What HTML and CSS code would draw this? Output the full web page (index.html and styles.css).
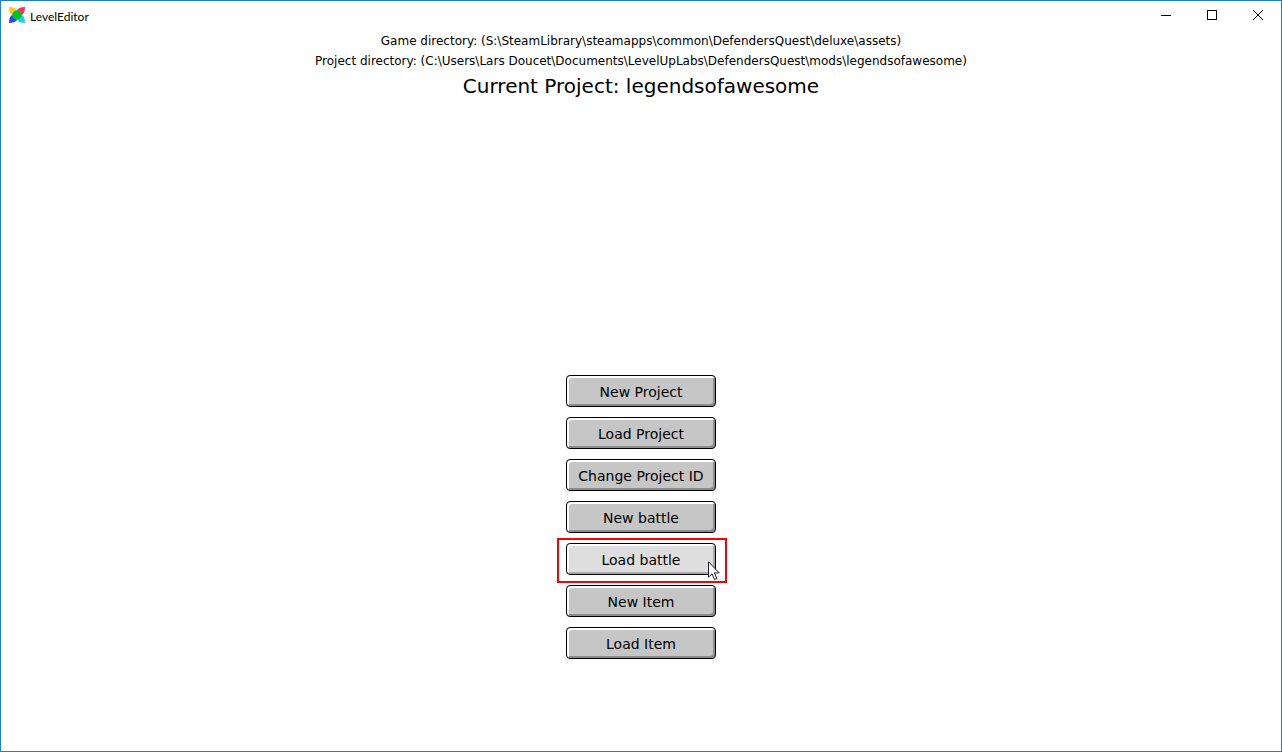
FILE: index.html
```html
<!DOCTYPE html>
<html lang="en">
<head>
<meta charset="utf-8">
<title>LevelEditor</title>
<link rel="stylesheet" href="styles.css">
</head>
<body>
<div class="window">
  <header class="titlebar">
    <svg class="logo" width="16" height="16" viewBox="0 0 16 16" aria-hidden="true">
      <path fill="#fdc62b" d="M0 0Q6 0 8 3L3 8Q0 6 0 0z"/>
      <path fill="#ff3355" d="M16 0Q10 0 8 3L13 8Q16 6 16 0z"/>
      <path fill="#3344ff" d="M0 16Q6 16 8 13L3 8Q0 10 0 16z"/>
      <path fill="#22ccff" d="M16 16Q10 16 8 13L13 8Q16 10 16 16z"/>
      <path fill="#00c42c" d="M8 3Q12 4 13 8Q12 12 8 13Q4 12 3 8Q4 4 8 3z"/>
    </svg>
    <span class="app-name">LevelEditor</span>
    <div class="controls">
      <button class="control" aria-label="Minimize"><svg width="10" height="10" viewBox="0 0 10 10" shape-rendering="crispEdges"><path d="M0 5h10v1H0z"/></svg></button>
      <button class="control" aria-label="Maximize"><svg width="10" height="10" viewBox="0 0 10 10" shape-rendering="crispEdges"><path fill="none" stroke="#000" d="M.5.5h9v9h-9z"/></svg></button>
      <button class="control" aria-label="Close"><svg width="10" height="10" viewBox="0 0 10 10"><path fill="none" stroke="#000" d="M0 0l10 10M10 0L0 10"/></svg></button>
    </div>
  </header>
  <main class="content">
    <p class="path">Game directory: (S:\SteamLibrary\steamapps\common\DefendersQuest\deluxe\assets)</p>
    <p class="path">Project directory: (C:\Users\Lars Doucet\Documents\LevelUpLabs\DefendersQuest\mods\legendsofawesome)</p>
    <h1 class="project">Current Project: legendsofawesome</h1>
    <nav class="menu">
      <button class="action">New Project</button>
      <button class="action">Load Project</button>
      <button class="action">Change Project ID</button>
      <button class="action">New battle</button>
      <div class="marked">
        <button class="action hovered">Load battle</button>
        <svg class="cursor" width="12" height="19" viewBox="0 0 12 19" aria-hidden="true"><path fill="#fff" stroke="#1c1c2c" d="M.5.8v15.400l3.500-3.400 2.500 5.700 2.400-1-2.500-5.600h4.800z"/></svg>
      </div>
      <button class="action">New Item</button>
      <button class="action">Load Item</button>
    </nav>
  </main>
</div>
</body>
</html>
```
FILE: styles.css
```css
* { box-sizing: border-box; }

body {
  margin: 0;
  background: #fff;
  color: #000;
  font-family: Verdana, "DejaVu Sans", sans-serif;
}

.window {
  min-height: 100vh;
  border: 1px solid #1c7fd2;
}

.titlebar {
  display: flex;
  align-items: center;
  height: 30px;
  padding-left: 8px;
}

.logo {
  flex: none;
  margin: 0 5px 2px 0;
}

.app-name {
  font: 12px "Segoe UI", Lato, sans-serif;
}

.controls {
  display: flex;
  align-self: flex-start;
  margin-left: auto;
}

.control {
  display: flex;
  align-items: center;
  justify-content: center;
  width: 46px;
  height: 28px;
  padding: 0;
  border: 0;
  background: none;
}

.content { text-align: center; }

.path {
  margin: 0;
  font-size: 12px;
  line-height: 20px;
}

.project {
  margin: 0;
  font-size: 20px;
  font-weight: 400;
  line-height: 30px;
}

.menu {
  display: flex;
  flex-direction: column;
  align-items: center;
  gap: 10px;
  margin-top: 274px;
}

.action {
  display: block;
  width: 150px;
  height: 32px;
  padding: 2px 0 0;
  border: 1px solid #000;
  border-radius: 4px;
  background: #c6c6c6;
  box-shadow: inset 2px 2px #fff, inset -2px -2px #8c8c8c;
  color: #000;
  font-family: inherit;
  font-size: 14px;
  white-space: nowrap;
}

.hovered {
  background: #dedede;
  box-shadow: inset 2px 2px #fff, inset -2px -2px #a8a8a8;
}

.marked { position: relative; }

.marked::after {
  content: "";
  position: absolute;
  inset: -5px -11px -8px -9px;
  border: 2px solid #f00;
  pointer-events: none;
}

.cursor {
  position: absolute;
  top: 18px;
  left: 142px;
}
```
